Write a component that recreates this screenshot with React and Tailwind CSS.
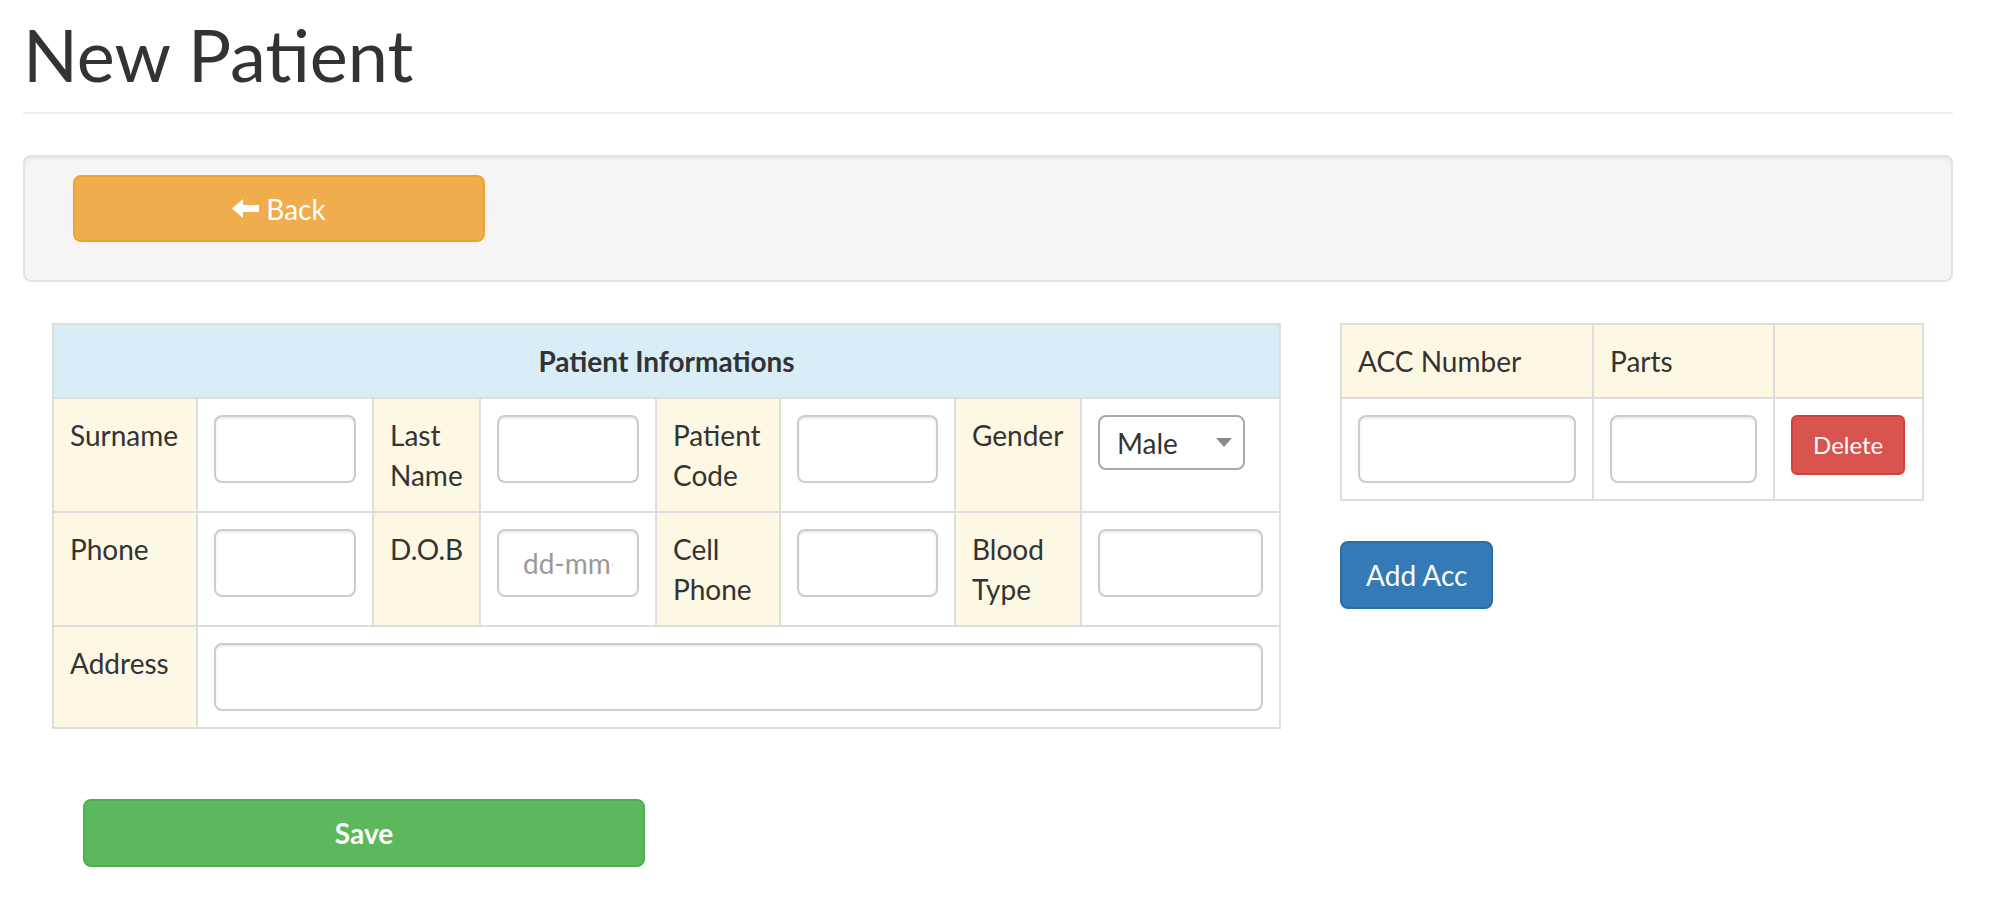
import React from 'react';

const inputCls =
  'block w-full h-[68px] px-[24px] py-[12px] text-[28px] leading-[40px] text-[#555] bg-white border-2 border-[#ccc] rounded-[8px] shadow-[inset_0_2px_2px_rgba(0,0,0,0.075)] outline-none placeholder:text-[#999]';

const labelCell = 'border-2 border-[#ddd] bg-[#fcf8e3] p-[16px] align-top text-left font-normal whitespace-nowrap';
const fieldCell = 'border-2 border-[#ddd] bg-white p-[16px] align-top';

const ArrowLeft = () => (
  <svg width="27" height="19" viewBox="0 0 27 19" fill="currentColor">
    <polygon points="0,9.5 11,0 11,6 27,6 27,13 11,13 11,19" />
  </svg>
);

const GenderSelect = () => (
  <div className="relative w-[147px]">
    <select
      defaultValue="Male"
      className="block w-full h-[55px] appearance-none bg-white border-2 border-[#a9a9a9] rounded-[8px] pl-[17px] pr-[40px] text-[28px] leading-[40px] text-[#333] outline-none"
    >
      <option>Male</option>
      <option>Female</option>
    </select>
    <span className="pointer-events-none absolute right-[13px] top-[23px] w-0 h-0 border-l-[8px] border-r-[8px] border-t-[9px] border-l-transparent border-r-transparent border-t-[#8a8a8a]" />
  </div>
);

const PatientTable = () => (
  <table className="w-[1227px] table-fixed border-collapse">
    <colgroup>
      <col className="w-[144px]" />
      <col className="w-[176px]" />
      <col className="w-[107px]" />
      <col className="w-[176px]" />
      <col className="w-[124px]" />
      <col className="w-[175px]" />
      <col className="w-[126px]" />
      <col className="w-[199px]" />
    </colgroup>
    <thead>
      <tr>
        <th colSpan={8} className="border-2 border-[#ddd] bg-[#d9edf7] p-[16px] text-center font-bold">
          Patient Informations
        </th>
      </tr>
    </thead>
    <tbody>
      <tr>
        <td className={labelCell}>Surname</td>
        <td className={fieldCell}><input type="text" className={inputCls} /></td>
        <td className={labelCell}>Last<br />Name</td>
        <td className={fieldCell}><input type="text" className={inputCls} /></td>
        <td className={labelCell}>Patient<br />Code</td>
        <td className={fieldCell}><input type="text" className={inputCls} /></td>
        <td className={labelCell}>Gender</td>
        <td className={fieldCell}><GenderSelect /></td>
      </tr>
      <tr>
        <td className={labelCell}>Phone</td>
        <td className={fieldCell}><input type="text" className={inputCls} /></td>
        <td className={labelCell}>D.O.B</td>
        <td className={fieldCell}><input type="text" placeholder="dd-mm-yyyy" className={inputCls} /></td>
        <td className={labelCell}>Cell<br />Phone</td>
        <td className={fieldCell}><input type="text" className={inputCls} /></td>
        <td className={labelCell}>Blood<br />Type</td>
        <td className={fieldCell}><input type="text" className={inputCls} /></td>
      </tr>
      <tr>
        <td className={labelCell}>Address</td>
        <td colSpan={7} className={fieldCell}><input type="text" className={inputCls} /></td>
      </tr>
    </tbody>
  </table>
);

const AccTable = () => (
  <table className="w-[582px] table-fixed border-collapse">
    <colgroup>
      <col className="w-[252px]" />
      <col className="w-[181px]" />
      <col className="w-[149px]" />
    </colgroup>
    <thead>
      <tr>
        <th className={labelCell}>ACC Number</th>
        <th className={labelCell}>Parts</th>
        <th className={labelCell}></th>
      </tr>
    </thead>
    <tbody>
      <tr>
        <td className={fieldCell}><input type="text" className={inputCls} /></td>
        <td className={fieldCell}><input type="text" className={inputCls} /></td>
        <td className={fieldCell}>
          <button className="h-[60px] px-[20px] rounded-[6px] border-2 border-[#d43f3a] bg-[#d9534f] text-white text-[24px] leading-[36px]">
            Delete
          </button>
        </td>
      </tr>
    </tbody>
  </table>
);

export default function App() {
  return (
    <div className="min-h-screen bg-white font-['Lato',sans-serif] text-[28px] leading-[40px] text-[#333]">
      <div className="ml-[23px] w-[1930px]">
        <h1 className="pt-[15px] pb-[18px] border-b-2 border-[#eee] text-[72px] leading-[79px] font-normal">
          New Patient
        </h1>

        <div className="mt-[41px] rounded-[8px] border-2 border-[#e3e3e3] bg-[#f5f5f5] pl-[48px] pt-[18px] pb-[38px] shadow-[inset_0_2px_2px_rgba(0,0,0,0.05)]">
          <button className="flex w-[412px] h-[67px] items-center justify-center gap-[7px] rounded-[8px] border-2 border-[#eea236] bg-[#f0ad4e] text-white">
            <ArrowLeft />
            <span>Back</span>
          </button>
        </div>

        <div className="mt-[41px] flex items-start pl-[29px]">
          <div>
            <PatientTable />
            <button className="mt-[70px] ml-[31px] w-[562px] h-[68px] rounded-[8px] border-2 border-[#4cae4c] bg-[#5cb85c] text-white font-bold">
              Save
            </button>
          </div>
          <div className="ml-[59px]">
            <AccTable />
            <button className="mt-[40px] h-[68px] px-[24px] rounded-[8px] border-2 border-[#2e6da4] bg-[#337ab7] text-white">
              Add Acc
            </button>
          </div>
        </div>
      </div>
    </div>
  );
}
